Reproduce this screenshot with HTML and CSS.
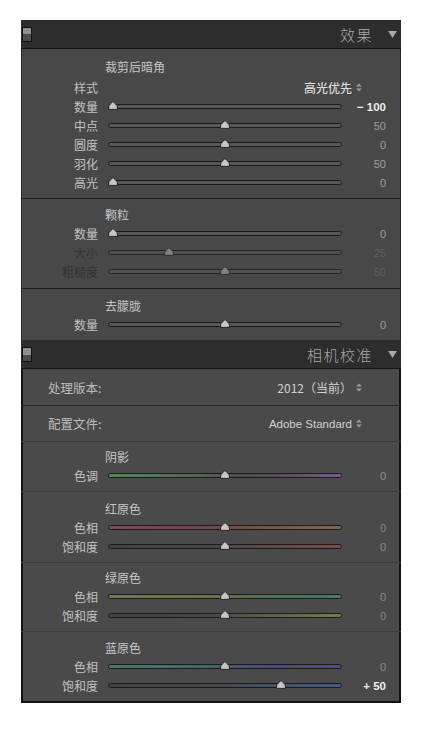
FILE: index.html
```html
<!DOCTYPE html>
<html lang="zh-CN">
<head>
<meta charset="utf-8">
<title>效果 / 相机校准</title>
<link rel="stylesheet" href="styles.css">
</head>
<body>
<div class="panel">
  <div class="hdr">
    <span class="sw"></span>
    <span class="hdr-title">效果</span>
    <svg class="tri" viewBox="0 0 9 7"><polygon points="0,0 9,0 4.5,7"/></svg>
  </div>
  <div class="body body1">
    <section class="sec sec-vig">
      <div class="title title-gap">裁剪后暗角</div>
      <div class="row">
        <span class="lbl">样式</span>
        <span class="dd">高光优先<svg class="ud" viewBox="0 0 6 9"><polygon points="0,3.6 3,0.6 6,3.6"/><polygon points="0,5.4 3,8.4 6,5.4"/></svg></span>
      </div>
      <div class="row">
        <span class="lbl">数量</span>
        <div class="track"><div class="rail"><svg class="thumb" style="left:0%" viewBox="0 0 10 9"><path d="M5 0.6 C6.2 2.2 9.4 3.8 9.4 6 L9.4 8.4 L0.6 8.4 L0.6 6 C0.6 3.8 3.8 2.2 5 0.6 Z"/></svg></div></div>
        <span class="val hi">− 100</span>
      </div>
      <div class="row">
        <span class="lbl">中点</span>
        <div class="track"><div class="rail"><svg class="thumb" style="left:50%" viewBox="0 0 10 9"><path d="M5 0.6 C6.2 2.2 9.4 3.8 9.4 6 L9.4 8.4 L0.6 8.4 L0.6 6 C0.6 3.8 3.8 2.2 5 0.6 Z"/></svg></div></div>
        <span class="val">50</span>
      </div>
      <div class="row">
        <span class="lbl">圆度</span>
        <div class="track"><div class="rail"><svg class="thumb" style="left:50%" viewBox="0 0 10 9"><path d="M5 0.6 C6.2 2.2 9.4 3.8 9.4 6 L9.4 8.4 L0.6 8.4 L0.6 6 C0.6 3.8 3.8 2.2 5 0.6 Z"/></svg></div></div>
        <span class="val">0</span>
      </div>
      <div class="row">
        <span class="lbl">羽化</span>
        <div class="track"><div class="rail"><svg class="thumb" style="left:50%" viewBox="0 0 10 9"><path d="M5 0.6 C6.2 2.2 9.4 3.8 9.4 6 L9.4 8.4 L0.6 8.4 L0.6 6 C0.6 3.8 3.8 2.2 5 0.6 Z"/></svg></div></div>
        <span class="val">50</span>
      </div>
      <div class="row">
        <span class="lbl">高光</span>
        <div class="track"><div class="rail"><svg class="thumb" style="left:0%" viewBox="0 0 10 9"><path d="M5 0.6 C6.2 2.2 9.4 3.8 9.4 6 L9.4 8.4 L0.6 8.4 L0.6 6 C0.6 3.8 3.8 2.2 5 0.6 Z"/></svg></div></div>
        <span class="val">0</span>
      </div>
    </section>
    <section class="sec sec-grain">
      <div class="title">颗粒</div>
      <div class="row">
        <span class="lbl">数量</span>
        <div class="track"><div class="rail"><svg class="thumb" style="left:0%" viewBox="0 0 10 9"><path d="M5 0.6 C6.2 2.2 9.4 3.8 9.4 6 L9.4 8.4 L0.6 8.4 L0.6 6 C0.6 3.8 3.8 2.2 5 0.6 Z"/></svg></div></div>
        <span class="val">0</span>
      </div>
      <div class="row dim">
        <span class="lbl">大小</span>
        <div class="track"><div class="rail"><svg class="thumb" style="left:25%" viewBox="0 0 10 9"><path d="M5 0.6 C6.2 2.2 9.4 3.8 9.4 6 L9.4 8.4 L0.6 8.4 L0.6 6 C0.6 3.8 3.8 2.2 5 0.6 Z"/></svg></div></div>
        <span class="val">25</span>
      </div>
      <div class="row dim">
        <span class="lbl">粗糙度</span>
        <div class="track"><div class="rail"><svg class="thumb" style="left:50%" viewBox="0 0 10 9"><path d="M5 0.6 C6.2 2.2 9.4 3.8 9.4 6 L9.4 8.4 L0.6 8.4 L0.6 6 C0.6 3.8 3.8 2.2 5 0.6 Z"/></svg></div></div>
        <span class="val">50</span>
      </div>
    </section>
    <section class="sec sec-haze">
      <div class="title">去朦胧</div>
      <div class="row">
        <span class="lbl">数量</span>
        <div class="track"><div class="rail"><svg class="thumb" style="left:50%" viewBox="0 0 10 9"><path d="M5 0.6 C6.2 2.2 9.4 3.8 9.4 6 L9.4 8.4 L0.6 8.4 L0.6 6 C0.6 3.8 3.8 2.2 5 0.6 Z"/></svg></div></div>
        <span class="val">0</span>
      </div>
    </section>
  </div>

  <div class="hdr">
    <span class="sw"></span>
    <span class="hdr-title">相机校准</span>
    <svg class="tri" viewBox="0 0 9 7"><polygon points="0,0 9,0 4.5,7"/></svg>
  </div>
  <div class="body body2">
    <div class="ddrow ddrow1">
      <span class="ddlbl">处理版本:</span>
      <span class="ddval">2012（当前）<svg class="ud" viewBox="0 0 6 9"><polygon points="0,3.6 3,0.6 6,3.6"/><polygon points="0,5.4 3,8.4 6,5.4"/></svg></span>
    </div>
    <div class="ddrow ddrow2">
      <span class="ddlbl">配置文件:</span>
      <span class="ddval latin">Adobe Standard<svg class="ud" viewBox="0 0 6 9"><polygon points="0,3.6 3,0.6 6,3.6"/><polygon points="0,5.4 3,8.4 6,5.4"/></svg></span>
    </div>
    <section class="csec cs-shadow">
      <div class="title">阴影</div>
      <div class="row">
        <span class="lbl">色调</span>
        <div class="track t-tint"><div class="rail"><svg class="thumb" style="left:50%" viewBox="0 0 10 9"><path d="M5 0.6 C6.2 2.2 9.4 3.8 9.4 6 L9.4 8.4 L0.6 8.4 L0.6 6 C0.6 3.8 3.8 2.2 5 0.6 Z"/></svg></div></div>
        <span class="val">0</span>
      </div>
    </section>
    <section class="csec cs-red">
      <div class="title">红原色</div>
      <div class="row">
        <span class="lbl">色相</span>
        <div class="track t-rhue"><div class="rail"><svg class="thumb" style="left:50%" viewBox="0 0 10 9"><path d="M5 0.6 C6.2 2.2 9.4 3.8 9.4 6 L9.4 8.4 L0.6 8.4 L0.6 6 C0.6 3.8 3.8 2.2 5 0.6 Z"/></svg></div></div>
        <span class="val">0</span>
      </div>
      <div class="row">
        <span class="lbl">饱和度</span>
        <div class="track t-rsat"><div class="rail"><svg class="thumb" style="left:50%" viewBox="0 0 10 9"><path d="M5 0.6 C6.2 2.2 9.4 3.8 9.4 6 L9.4 8.4 L0.6 8.4 L0.6 6 C0.6 3.8 3.8 2.2 5 0.6 Z"/></svg></div></div>
        <span class="val">0</span>
      </div>
    </section>
    <section class="csec cs-green">
      <div class="title">绿原色</div>
      <div class="row">
        <span class="lbl">色相</span>
        <div class="track t-ghue"><div class="rail"><svg class="thumb" style="left:50%" viewBox="0 0 10 9"><path d="M5 0.6 C6.2 2.2 9.4 3.8 9.4 6 L9.4 8.4 L0.6 8.4 L0.6 6 C0.6 3.8 3.8 2.2 5 0.6 Z"/></svg></div></div>
        <span class="val">0</span>
      </div>
      <div class="row">
        <span class="lbl">饱和度</span>
        <div class="track t-gsat"><div class="rail"><svg class="thumb" style="left:50%" viewBox="0 0 10 9"><path d="M5 0.6 C6.2 2.2 9.4 3.8 9.4 6 L9.4 8.4 L0.6 8.4 L0.6 6 C0.6 3.8 3.8 2.2 5 0.6 Z"/></svg></div></div>
        <span class="val">0</span>
      </div>
    </section>
    <section class="csec cs-blue">
      <div class="title">蓝原色</div>
      <div class="row">
        <span class="lbl">色相</span>
        <div class="track t-bhue"><div class="rail"><svg class="thumb" style="left:50%" viewBox="0 0 10 9"><path d="M5 0.6 C6.2 2.2 9.4 3.8 9.4 6 L9.4 8.4 L0.6 8.4 L0.6 6 C0.6 3.8 3.8 2.2 5 0.6 Z"/></svg></div></div>
        <span class="val">0</span>
      </div>
      <div class="row">
        <span class="lbl">饱和度</span>
        <div class="track t-bsat"><div class="rail"><svg class="thumb" style="left:75%" viewBox="0 0 10 9"><path d="M5 0.6 C6.2 2.2 9.4 3.8 9.4 6 L9.4 8.4 L0.6 8.4 L0.6 6 C0.6 3.8 3.8 2.2 5 0.6 Z"/></svg></div></div>
        <span class="val hi">+ 50</span>
      </div>
    </section>
  </div>
</div>
</body>
</html>
```

FILE: styles.css
```css
html, body {
  margin: 0;
  padding: 0;
  background: #ffffff;
}

body {
  font-family: "Noto Sans CJK SC", "Noto Sans", sans-serif;
}

.panel {
  width: 380px;
  margin: 20px 0 0 21px;
}

/* header bars */
.hdr {
  height: 28px;
  background: #2d2d2d;
  border-bottom: 1px solid #141414;
  display: flex;
  align-items: center;
  padding: 0 4px 0 1px;
}

.sw {
  width: 10px;
  height: 15px;
  box-sizing: border-box;
  border: 1px solid #121212;
  background: linear-gradient(#8f8f8f 0, #8f8f8f 50%, #4d4d4d 50%, #4d4d4d 100%);
}

.hdr-title {
  margin-left: auto;
  margin-right: 15px;
  font-size: 15px;
  font-weight: 300;
  letter-spacing: 1.5px;
  line-height: 1;
  color: #a8a8a8;
}

.tri {
  width: 9px;
  height: 7px;
  fill: #a8a8a8;
}

/* bodies */
.body {
  background: #484848;
}

.body1 {
  box-shadow: inset 1px 0 0 #262626, inset -1px 0 0 #262626;
}

.body2 {
  background: #4a4a4a;
  border-bottom: 2px solid #121212;
  box-shadow: inset 2px 0 0 #121212, inset -2px 0 0 #121212;
}

.sec {
  border-bottom: 1px solid #1f1f1f;
}

.sec:last-child {
  border-bottom: none;
}

.sec-vig {
  padding: 8px 0 6px;
}

.sec-grain {
  padding: 6px 0 7px;
}

.sec-haze {
  padding: 7px 0 6px;
}

.title {
  height: 19px;
  line-height: 19px;
  padding-left: 84px;
  font-size: 12px;
  color: #c6c6c6;
}

.title-gap {
  margin-bottom: 2px;
}

.row {
  display: grid;
  grid-template-columns: 77px 234px 34px;
  column-gap: 10px;
  height: 19px;
  align-items: center;
}

.lbl {
  text-align: right;
  font-size: 12px;
  line-height: 19px;
  color: #c2c2c2;
  white-space: nowrap;
}

.val {
  text-align: right;
  font-family: "Liberation Sans", "Noto Sans", sans-serif;
  font-size: 11px;
  color: #9e9e9e;
  white-space: nowrap;
}

.val.hi {
  color: #ededed;
  font-weight: 700;
  font-size: 11.5px;
}

.dd {
  grid-column: 2 / 4;
  justify-self: end;
  margin-right: 24px;
  display: flex;
  align-items: center;
  gap: 4px;
  font-size: 12px;
  color: #dadada;
  font-weight: 500;
}

.ud {
  width: 6px;
  height: 9px;
  fill: #9a9a9a;
}

/* slider */
.track {
  position: relative;
  height: 5px;
  box-sizing: border-box;
  border: 1px solid #1b1b1b;
  border-radius: 3px;
  background: #575757;
}

.rail {
  position: absolute;
  left: 4px;
  right: 4px;
  top: 0;
  bottom: 0;
}

.thumb {
  position: absolute;
  top: -4px;
  width: 10px;
  height: 9px;
  transform: translateX(-50%);
  fill: #c6c6c6;
  stroke: #1a1a1a;
  stroke-width: 0.9;
}

.dim .lbl {
  color: #333333;
}

.dim .val {
  color: #606060;
}

.dim .track {
  border-color: #262626;
  background: #505050;
}

.dim .thumb {
  fill: #808080;
  stroke: #2a2a2a;
}

/* camera calibration */
.ddrow {
  display: flex;
  align-items: center;
  justify-content: space-between;
  padding: 0 39px 0 27px;
}

.ddrow1 {
  height: 36px;
  border-bottom: 1px solid #262626;
}

.ddrow2 {
  height: 35px;
  border-bottom: 1px solid #3b3b3b;
}

.ddlbl {
  font-size: 12.5px;
  color: #bcbcbc;
}

.ddval {
  display: flex;
  align-items: center;
  gap: 4px;
  font-size: 12px;
  color: #d0d0d0;
}

.ddval.latin {
  font-family: "Liberation Sans", "Noto Sans", sans-serif;
  font-size: 11.5px;
}

.csec {
  border-bottom: 1px solid #3c3c3c;
}

.csec:last-child {
  border-bottom: none;
}

.cs-shadow {
  padding: 5px 0 6px;
}

.cs-red {
  padding: 7px 0 6px;
}

.cs-green {
  padding: 5px 0 6px;
}

.cs-blue {
  padding: 6px 0 6px;
}

.csec .val {
  color: #8c8c8c;
}

.csec .val.hi {
  color: #ededed;
}

.t-tint {
  background: linear-gradient(90deg, #558755 0%, #4f664f 40%, #4e4e4e 55%, #5c4c60 75%, #7e5690 100%);
}

.t-rhue {
  background: linear-gradient(90deg, #834563 0%, #774248 35%, #74503f 60%, #80694a 100%);
}

.t-rsat {
  background: linear-gradient(90deg, #434343 0%, #4a4545 45%, #7f4c44 100%);
}

.t-ghue {
  background: linear-gradient(90deg, #7a7a44 0%, #6c7046 40%, #4c7352 70%, #44796a 100%);
}

.t-gsat {
  background: linear-gradient(90deg, #434343 0%, #4a4a45 45%, #797c48 100%);
}

.t-bhue {
  background: linear-gradient(90deg, #457a6e 0%, #44686c 40%, #464a78 70%, #4f4a96 100%);
}

.t-bsat {
  background: linear-gradient(90deg, #434343 0%, #45484c 45%, #455c88 100%);
}
```
